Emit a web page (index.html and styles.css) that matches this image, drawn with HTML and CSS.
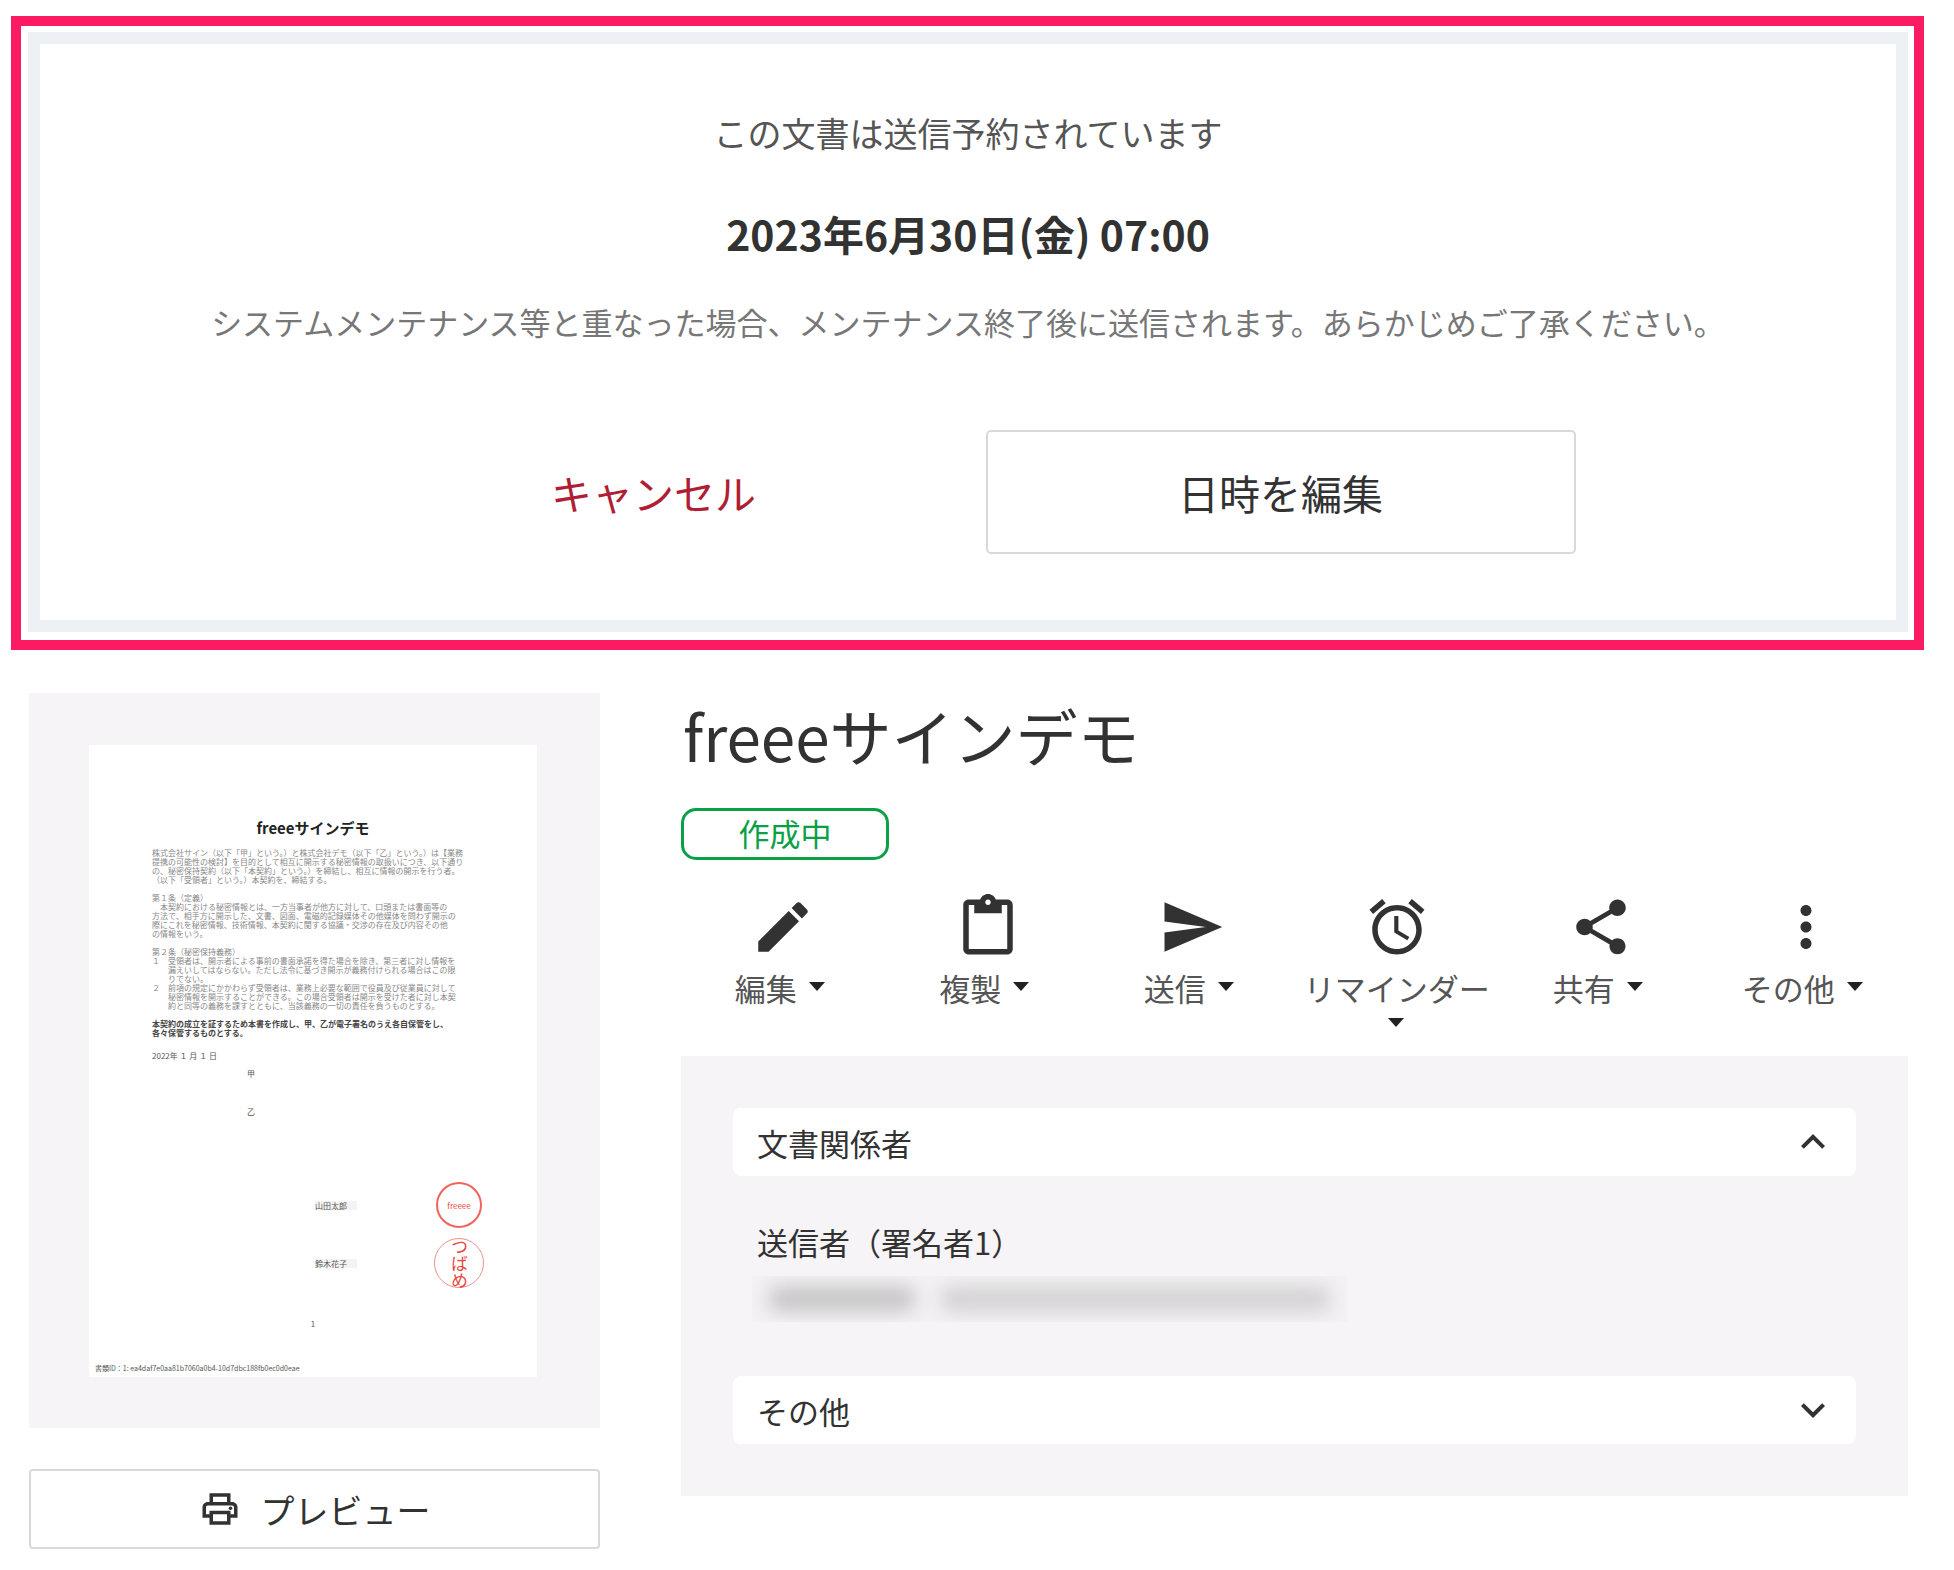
FILE: index.html
```html
<!DOCTYPE html>
<html lang="ja">
<head>
<meta charset="utf-8">
<meta name="viewport" content="width=device-width, initial-scale=1">
<title>freeeサインデモ</title>
<link rel="stylesheet" href="styles.css">
</head>
<body>
<section class="highlight">
  <div class="notice">
    <p class="notice-lead">この文書は送信予約されています</p>
    <p class="notice-date">2023年6月30日(金) 07:00</p>
    <p class="notice-note">システムメンテナンス等と重なった場合、メンテナンス終了後に送信されます。あらかじめご了承ください。</p>
    <div class="notice-actions">
      <button type="button" class="btn btn-cancel">キャンセル</button>
      <button type="button" class="btn btn-edit">日時を編集</button>
    </div>
  </div>
</section>

<main class="content">
  <aside class="side">
    <div class="thumb">
      <article class="sheet">
        <h2 class="sheet-title">freeeサインデモ</h2>
        <div class="sheet-body">
          <p>株式会社サイン（以下「甲」という。）と株式会社デモ（以下「乙」という。）は【業務<br>提携の可能性の検討】を目的として相互に開示する秘密情報の取扱いにつき、以下通り<br>の、秘密保持契約（以下「本契約」という。）を締結し、相互に情報の開示を行う者。<br>（以下「受領者」という。）本契約を、締結する。</p>
          <p>第１条（定義）<br>　本契約における秘密情報とは、一方当事者が他方に対して、口頭または書面等の<br>方法で、相手方に開示した、文書、図面、電磁的記録媒体その他媒体を問わず開示の<br>際にこれを秘密情報、技術情報、本契約に関する協議・交渉の存在及び内容その他<br>の情報をいう。</p>
          <p>第２条（秘密保持義務）<br>１　受領者は、開示者による事前の書面承諾を得た場合を除き、第三者に対し情報を<br>　　漏えいしてはならない。ただし法令に基づき開示が義務付けられる場合はこの限<br>　　りでない。<br>２　前項の規定にかかわらず受領者は、業務上必要な範囲で役員及び従業員に対して<br>　　秘密情報を開示することができる。この場合受領者は開示を受けた者に対し本契<br>　　約と同等の義務を課すとともに、当該義務の一切の責任を負うものとする。</p>
          <p class="sheet-strong">本契約の成立を証するため本書を作成し、甲、乙が電子署名のうえ各自保管をし、<br>各々保管するものとする。</p>
        </div>
        <p class="sheet-date">2022年 １ 月 １ 日</p>
        <p class="sheet-mark">甲</p>
        <p class="sheet-mark mark-second">乙</p>
        <div class="sign">
          <span class="signer">山田太郎</span>
          <span class="seal seal-small">freeee</span>
        </div>
        <div class="sign sign-second">
          <span class="signer">鈴木花子</span>
          <span class="seal seal-name">つばめ</span>
        </div>
        <p class="sheet-page">1</p>
        <p class="sheet-foot">書類ID：1: ea4daf7e0aa81b7060a0b4-10d7dbc188fb0ec0d0eae</p>
      </article>
    </div>
    <button type="button" class="preview">
      <svg class="preview-icon" viewBox="0 0 24 24" aria-hidden="true"><path d="M19 8h-1V3H6v5H5c-1.660 0-3 1.340-3 3v6h4v4h12v-4h4v-6c0-1.660-1.340-3-3-3zM8 5h8v3H8V5zm8 12v2H8v-4h8v2zm2-2v-2H6v2H4v-4c0-.55.45-1 1-1h14c.55 0 1 .45 1 1v4h-2z"/><circle cx="18" cy="11.500" r="1"/></svg>
      <span>プレビュー</span>
    </button>
  </aside>

  <div class="detail">
    <h1 class="title">freeeサインデモ</h1>
    <span class="status">作成中</span>

    <div class="tools">
      <button type="button" class="tool">
        <svg class="tool-icon" viewBox="0 0 24 24" aria-hidden="true"><path d="M3 17.250V21h3.750L17.810 9.940l-3.750-3.750L3 17.250zM20.710 7.040c.39-.39.39-1.020 0-1.410l-2.340-2.340c-.39-.39-1.020-.39-1.410 0l-1.830 1.830 3.750 3.750 1.830-1.830z"/></svg>
        <span class="tool-label">編集 <i class="caret"></i></span>
      </button>
      <button type="button" class="tool">
        <svg class="tool-icon" viewBox="0 0 24 24" aria-hidden="true"><path d="M19 2h-4.180C14.400.84 13.300 0 12 0S9.600.84 9.180 2H5c-1.100 0-2 .9-2 2v16c0 1.100.9 2 2 2h14c1.100 0 2-.9 2-2V4c0-1.100-.9-2-2-2zm-7 0c.55 0 1 .45 1 1s-.45 1-1 1-1-.45-1-1 .45-1 1-1zm7 18H5V4h2v3h10V4h2v16z"/></svg>
        <span class="tool-label">複製 <i class="caret"></i></span>
      </button>
      <button type="button" class="tool">
        <svg class="tool-icon" viewBox="0 0 24 24" aria-hidden="true"><path d="M2.010 21L23 12 2.010 3 2 10l15 2-15 2z"/></svg>
        <span class="tool-label">送信 <i class="caret"></i></span>
      </button>
      <button type="button" class="tool">
        <svg class="tool-icon" viewBox="0 0 24 24" aria-hidden="true"><path d="M22 5.720l-4.600-3.860-1.290 1.530 4.600 3.860L22 5.720zM7.880 3.390L6.600 1.860 2 5.710l1.290 1.530 4.590-3.850zM12.500 8H11v6l4.750 2.850.75-1.230-4-2.370V8zM12 4c-4.970 0-9 4.030-9 9s4.020 9 9 9c4.970 0 9-4.030 9-9s-4.030-9-9-9zm0 16c-3.870 0-7-3.130-7-7s3.130-7 7-7 7 3.130 7 7-3.130 7-7 7z"/></svg>
        <span class="tool-label">リマインダー <i class="caret"></i></span>
      </button>
      <button type="button" class="tool">
        <svg class="tool-icon" viewBox="0 0 24 24" aria-hidden="true"><path d="M18 16.080c-.76 0-1.440.3-1.960.77L8.910 12.700c.05-.23.09-.46.09-.7s-.04-.47-.09-.7l7.050-4.110c.54.5 1.250.81 2.040.81 1.660 0 3-1.340 3-3s-1.340-3-3-3-3 1.340-3 3c0 .24.04.47.09.7L8.040 9.810C7.500 9.310 6.790 9 6 9c-1.660 0-3 1.340-3 3s1.340 3 3 3c.79 0 1.500-.31 2.040-.81l7.120 4.160c-.05.21-.08.43-.08.65 0 1.610 1.310 2.920 2.920 2.920s2.920-1.310 2.920-2.920-1.310-2.920-2.920-2.920z"/></svg>
        <span class="tool-label">共有 <i class="caret"></i></span>
      </button>
      <button type="button" class="tool">
        <svg class="tool-icon" viewBox="0 0 24 24" aria-hidden="true"><path d="M12 8c1.100 0 2-.9 2-2s-.9-2-2-2-2 .9-2 2 .9 2 2 2zm0 2c-1.100 0-2 .9-2 2s.9 2 2 2 2-.9 2-2-.9-2-2-2zm0 6c-1.100 0-2 .9-2 2s.9 2 2 2 2-.9 2-2-.9-2-2-2z"/></svg>
        <span class="tool-label">その他 <i class="caret"></i></span>
      </button>
    </div>

    <div class="panel">
      <button type="button" class="fold" aria-expanded="true">
        <span>文書関係者</span>
        <svg class="fold-icon" viewBox="0 0 24 24" aria-hidden="true"><path d="M12 8l-6 6 1.410 1.410L12 10.830l4.590 4.580L18 14z"/></svg>
      </button>
      <div class="fold-body">
        <p class="person">送信者（署名者1）</p>
        <div class="redacted"><span class="smudge smudge-name"></span><span class="smudge smudge-mail"></span></div>
      </div>
      <button type="button" class="fold" aria-expanded="false">
        <span>その他</span>
        <svg class="fold-icon" viewBox="0 0 24 24" aria-hidden="true"><path d="M16.590 8.590L12 13.170 7.410 8.590 6 10l6 6 6-6z"/></svg>
      </button>
    </div>
  </div>
</main>
</body>
</html>
```
FILE: styles.css
```css
* {
  box-sizing: border-box;
}

body {
  margin: 0;
  padding: 16px 0 20px;
  background: #fff;
  color: #323232;
  font-family: "Noto Sans CJK JP", sans-serif;
  font-size: 31px;
}

p,
h1,
h2 {
  margin: 0;
}

button {
  padding: 0;
  border: 0;
  background: none;
  color: inherit;
  font-family: inherit;
  font-size: inherit;
  cursor: pointer;
}

svg {
  fill: currentColor;
}

/* Scheduled-send notice */
.highlight {
  margin: 0 30px 0 11px;
  padding: 6px 6px 8px 7px;
  border: 10px solid #fb1b63;
}

.notice {
  display: flex;
  flex-direction: column;
  align-items: center;
  padding: 65px 40px 66px;
  border: 12px solid #edf0f5;
  text-align: center;
}

.notice-lead {
  font-size: 34px;
  line-height: 48px;
  color: #555;
}

.notice-date {
  margin-top: 48px;
  font-size: 41px;
  font-weight: 700;
  line-height: 56px;
}

.notice-note {
  margin-top: 37px;
  line-height: 48px;
  color: #777;
}

.notice-actions {
  display: flex;
  gap: 39px;
  width: 100%;
  max-width: 1215px;
  margin-top: 84px;
}

.btn {
  flex: 1;
  height: 124px;
  border-radius: 5px;
  font-size: 41px;
}

.btn-cancel {
  color: #b01e35;
}

.btn-edit {
  border: 2px solid #d9d9d9;
}

/* Document area */
.content {
  display: grid;
  grid-template-columns: minmax(0, 571fr) minmax(0, 1227fr);
  align-items: start;
  gap: 81px;
  margin: 43px 46px 0 29px;
}

.thumb {
  padding: 52px 63px 51px 60px;
  background: #f6f4f6;
}

.sheet {
  display: flex;
  flex-direction: column;
  min-height: 632px;
  padding: 72px 6px 4px;
  background: #fff;
  color: #555;
  font-size: 8px;
  line-height: 9px;
  white-space: nowrap;
}

.sheet-title {
  color: #222;
  font-size: 15px;
  line-height: 22px;
  text-align: center;
}

.sheet-body {
  display: flex;
  flex-direction: column;
  gap: 9px;
  margin: 9px 0 0 57px;
  color: #888;
}

.sheet-strong {
  color: #444;
  font-weight: 700;
}

.sheet-date {
  margin: 14px 0 0 57px;
}

.sheet-mark {
  margin: 9px 0 0 152px;
}

.mark-second {
  margin-top: 29px;
}

.sign {
  display: flex;
  align-items: center;
  height: 50px;
  margin: 64px 47px 0 220px;
}

.sign-second {
  margin-top: 8px;
}

.signer {
  width: 42px;
  background: #f4f2f3;
}

.seal {
  display: flex;
  align-items: center;
  justify-content: center;
  width: 50px;
  height: 50px;
  margin-left: auto;
  border-radius: 50%;
  color: #e8473f;
}

.seal-small {
  width: 46px;
  height: 46px;
  margin-right: 2px;
  border: 2px solid #f2635c;
  font-size: 8px;
}

.seal-name {
  border: 1px solid #ee8f8a;
  font-size: 17px;
  line-height: 20px;
  writing-mode: vertical-rl;
}

.sheet-page {
  margin-top: 31px;
  text-align: center;
}

.sheet-foot {
  margin-top: auto;
  font-size: 7px;
}

.preview {
  display: flex;
  align-items: center;
  justify-content: center;
  gap: 20px;
  width: 100%;
  height: 80px;
  margin-top: 41px;
  border: 2px solid #d9d9d9;
  border-radius: 4px;
  font-size: 34px;
}

.preview-icon {
  width: 42px;
  height: 42px;
}

.title {
  padding-left: 2px;
  font-size: 62px;
  font-weight: 400;
  line-height: 84px;
}

.status {
  display: flex;
  align-items: center;
  justify-content: center;
  width: 208px;
  height: 52px;
  margin-top: 31px;
  padding-bottom: 4px;
  border: 3px solid #0aa146;
  border-radius: 15px;
  color: #0aa146;
}

.tools {
  display: grid;
  grid-template-columns: repeat(6, minmax(0, 1fr));
  align-items: start;
  margin-top: 34px;
}

.tool {
  display: flex;
  flex-direction: column;
  align-items: center;
}

.tool-icon {
  width: 66px;
  height: 66px;
}

.tool-label {
  margin-top: 10px;
  color: #555;
  line-height: 36px;
}

.caret {
  display: inline-block;
  margin: 0 7px 0 5px;
  border: 8px solid transparent;
  border-top: 9px solid #222;
  border-bottom: 0;
  vertical-align: 10px;
}

.panel {
  margin-top: 14px;
  padding: 52px;
  background: #f6f4f6;
}

.fold {
  display: flex;
  align-items: center;
  justify-content: space-between;
  width: 100%;
  height: 68px;
  padding: 0 19px 0 24px;
  border-radius: 8px;
  background: #fff;
}

.fold-icon {
  width: 48px;
  height: 48px;
}

.fold-body {
  padding: 42px 19px 54px;
}

.person {
  padding-left: 5px;
  line-height: 48px;
}

.redacted {
  display: flex;
  gap: 24px;
  width: 595px;
  max-width: 100%;
  height: 46px;
  margin-top: 10px;
  padding: 10px 16px;
  background: #f3f1f3;
  overflow: hidden;
}

.smudge {
  border-radius: 13px;
  background: #c8c7c8;
  filter: blur(9px);
}

.smudge-name {
  width: 148px;
}

.smudge-mail {
  flex: 1;
  background: #d4d3d4;
}
```
